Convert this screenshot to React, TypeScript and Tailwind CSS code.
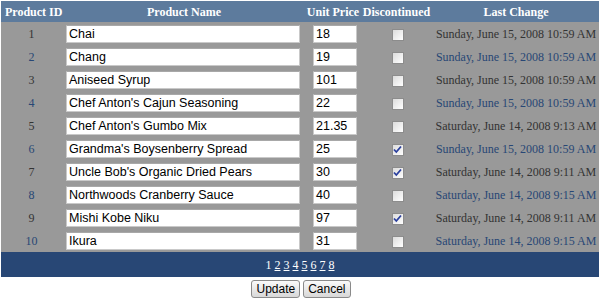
import React from "react";

interface Product {
  id: number;
  name: string;
  price: string;
  discontinued: boolean;
  changed: string;
}

const products: Product[] = [
  { id: 1, name: "Chai", price: "18", discontinued: false, changed: "Sunday, June 15, 2008 10:59 AM" },
  { id: 2, name: "Chang", price: "19", discontinued: false, changed: "Sunday, June 15, 2008 10:59 AM" },
  { id: 3, name: "Aniseed Syrup", price: "101", discontinued: false, changed: "Sunday, June 15, 2008 10:59 AM" },
  { id: 4, name: "Chef Anton's Cajun Seasoning", price: "22", discontinued: false, changed: "Sunday, June 15, 2008 10:59 AM" },
  { id: 5, name: "Chef Anton's Gumbo Mix", price: "21.35", discontinued: false, changed: "Saturday, June 14, 2008 9:13 AM" },
  { id: 6, name: "Grandma's Boysenberry Spread", price: "25", discontinued: true, changed: "Sunday, June 15, 2008 10:59 AM" },
  { id: 7, name: "Uncle Bob's Organic Dried Pears", price: "30", discontinued: true, changed: "Saturday, June 14, 2008 9:11 AM" },
  { id: 8, name: "Northwoods Cranberry Sauce", price: "40", discontinued: false, changed: "Saturday, June 14, 2008 9:15 AM" },
  { id: 9, name: "Mishi Kobe Niku", price: "97", discontinued: true, changed: "Saturday, June 14, 2008 9:11 AM" },
  { id: 10, name: "Ikura", price: "31", discontinued: false, changed: "Saturday, June 14, 2008 9:15 AM" },
];

const serif = { fontFamily: '"Liberation Serif", "Times New Roman", serif' };

const CheckBox = ({ checked }: { checked: boolean }) => (
  <span className="inline-flex w-[12px] h-[12px] items-center justify-center border border-[#8c8c8c] bg-gradient-to-br from-[#dcdcdc] to-[#ffffff] align-middle">
    {checked && (
      <svg width="9" height="9" viewBox="0 0 9 9">
        <path d="M1 4.5 L3.3 7 L8 1.5" stroke="#2a3f9e" strokeWidth="1.8" fill="none" />
      </svg>
    )}
  </span>
);

const TextBox = ({ value, width }: { value: string; width: string }) => (
  <div
    className={`${width} h-[18px] bg-white border border-[#c9c9c9] border-t-[#a8a8a8] pl-[2px] text-[12.5px] leading-[16px] text-black font-['Liberation_Sans',Arial,sans-serif] whitespace-nowrap overflow-hidden`}
  >
    {value}
  </div>
);

export default function App() {
  return (
    <div className="w-[600px] h-[301px] bg-white pt-[1px] px-[1px]" style={serif}>
      <table className="w-[598px] table-fixed border-collapse">
        <colgroup>
          <col className="w-[61px]" />
          <col className="w-[244px]" />
          <col className="w-[54px]" />
          <col className="w-[73px]" />
          <col className="w-[166px]" />
        </colgroup>
        <thead>
          <tr className="h-[21px] bg-[#5d7b9d] text-white text-[12px] font-bold">
            <th className="text-left pl-[4px] whitespace-nowrap">Product ID</th>
            <th className="text-center">Product Name</th>
            <th className="text-center whitespace-nowrap">Unit Price</th>
            <th className="text-center">Discontinued</th>
            <th className="text-center">Last Change</th>
          </tr>
        </thead>
        <tbody>
          {products.map((p) => {
            const alt = p.id % 2 === 0;
            return (
              <tr
                key={p.id}
                className={`h-[23px] bg-[#999999] text-[12px] ${alt ? "text-[#284775]" : "text-[#333333]"}`}
              >
                <td className="text-center">{p.id}</td>
                <td className="pl-[4px]">
                  <TextBox value={p.name} width="w-[234px]" />
                </td>
                <td className="pl-[7px]">
                  <TextBox value={p.price} width="w-[44px]" />
                </td>
                <td className="text-center pl-[2px]">
                  <CheckBox checked={p.discontinued} />
                </td>
                <td className="text-center whitespace-nowrap">{p.changed}</td>
              </tr>
            );
          })}
          <tr className="h-[25px] bg-[#284775] text-white text-[12px]">
            <td colSpan={5} className="text-center">
              <span className="inline-flex gap-[3px]">
                <span>1</span>
                {[2, 3, 4, 5, 6, 7, 8].map((n) => (
                  <a key={n} href="#" className="underline">
                    {n}
                  </a>
                ))}
              </span>
            </td>
          </tr>
        </tbody>
      </table>
      <div className="flex justify-center gap-[3px] mt-[3px] font-['Liberation_Sans',Arial,sans-serif] text-[12px]">
        <button className="h-[18px] px-[4px] border border-[#8a8a8a] rounded-[3px] bg-gradient-to-b from-[#fafafa] to-[#d8d8d8] text-black leading-none ml-[2px]">
          Update
        </button>
        <button className="h-[18px] px-[4px] border border-[#8a8a8a] rounded-[3px] bg-gradient-to-b from-[#fafafa] to-[#d8d8d8] text-black leading-none">
          Cancel
        </button>
      </div>
    </div>
  );
}
